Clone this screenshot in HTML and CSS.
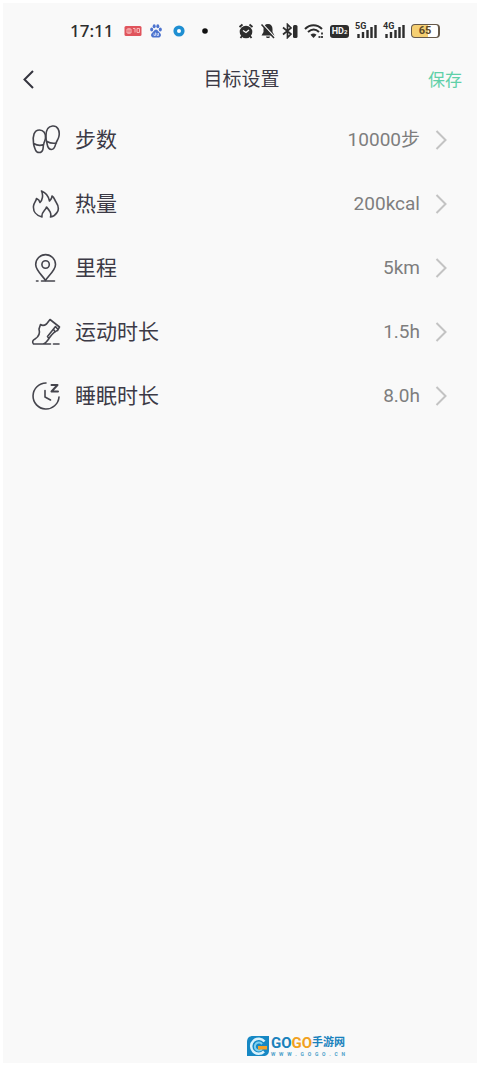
FILE: index.html
```html
<!DOCTYPE html>
<html lang="zh-CN">
<head>
<meta charset="utf-8">
<meta name="viewport" content="width=device-width, initial-scale=1">
<title>目标设置</title>
<link rel="stylesheet" href="styles.css">
</head>
<body>
<div class="screen">
  <div class="status">
    <div class="status-left">
      <span class="clock">17:11</span>
      <svg width="18" height="12" viewBox="0 0 18 12"><rect x="0.5" y="1" width="17" height="10" rx="1.500" fill="#e0545c"/><path d="M3 4h4v4H3zM5 3v6M9 3.500h2v4M13 3.500h2.500v4H13z" fill="none" stroke="#f7b9b9"/></svg>
      <svg class="paw" width="12" height="14" viewBox="0 0 12 14" fill="#4d74cf"><ellipse cx="1.700" cy="5.500" rx="1.500" ry="2"/><ellipse cx="4.200" cy="2.300" rx="1.500" ry="2"/><ellipse cx="7.800" cy="2.300" rx="1.500" ry="2"/><ellipse cx="10.300" cy="5.500" rx="1.500" ry="2"/><path d="M6 5.500c2 0 2.500 2.500 4 3.500 2 2 .5 5-2 4.500H4C1.500 14 0 11 2 9c1.500-1 2-3.500 4-3.500z"/><path d="M4 9.500v2h1.500v-3M7 9v2.500h1.500V9" fill="none" stroke="#dbe5fb" stroke-width=".8"/></svg>
      <svg class="ring" width="12" height="12" viewBox="0 0 12 12"><circle cx="6" cy="6" r="3.800" fill="#fff" stroke="#1f8fd2" stroke-width="3.600"/></svg>
      <svg class="dot" width="6" height="6" viewBox="0 0 6 6"><circle cx="3" cy="3" r="2.800" fill="#111"/></svg>
    </div>
    <div class="status-right">
      <svg width="16" height="16" viewBox="0 0 16 16"><circle cx="8" cy="9" r="6.300" fill="#2d2d2d"/><path d="M1.500 4 4.500 1.500M14.500 4l-3-2.500M4 13l-1.500 2M12 13l1.500 2" stroke="#2d2d2d" stroke-width="1.800"/><path d="M5 7.500 8 9.500l3-2.500" fill="none" stroke="#f9f9f9" stroke-width="1.300"/></svg>
      <svg width="16" height="16" viewBox="0 0 16 16"><path d="M8 1c3 0 4.500 2 4.500 5v3l2 3.500h-13l2-3.500V6C3.500 3 5 1 8 1zM6 13.500h4c0 2-4 2-4 0z" fill="#2d2d2d"/><path d="M3 1.500 15.500 15" stroke="#f9f9f9" stroke-width="1.500"/><path d="M1.500 1.500 14 15" stroke="#2d2d2d" stroke-width="1.500"/></svg>
      <svg width="16" height="16" viewBox="0 0 16 16"><path d="M1 4.500 9 11l-3.500 3.500v-13L9 5l-8 6.500" fill="none" stroke="#2d2d2d" stroke-width="1.700"/><rect x="11" y="2" width="4.500" height="13" rx="1.500" fill="#2d2d2d"/></svg>
      <svg width="20" height="16" viewBox="0 0 20 16"><path d="M1 6c5-5 12-5 17 0M4 9c4-3.500 7.500-3.500 11 0" fill="none" stroke="#2d2d2d" stroke-width="2"/><path d="m9.500 15-3-3.300c2-1.600 4-1.600 6 0z" fill="#2d2d2d"/><path d="M15.500 13v2M18 9.500v2M18 13v2" stroke="#444" stroke-width="2"/></svg>
      <span class="hd">HD<small>2</small></span>
      <span class="signal"><small>5G</small><svg width="22" height="16" viewBox="0 0 22 16"><path d="M3.500 11v4M8 9v6M12.500 7v8M16.500 4v11M20.500 2v13" stroke="#2d2d2d" stroke-width="2.400"/></svg></span>
      <span class="signal"><small>4G</small><svg width="22" height="16" viewBox="0 0 22 16"><path d="M3.500 11v4M8 9v6M12.500 7v8M16.500 4v11M20.500 2v13" stroke="#2d2d2d" stroke-width="2.400"/></svg></span>
      <span class="battery">65</span>
    </div>
  </div>

  <header class="bar">
    <button class="back" aria-label="返回"><svg width="14" height="20" viewBox="0 0 14 20"><path d="M12 1 3.500 9.500l8.500 8.500" fill="none" stroke="#35353f" stroke-width="2"/></svg></button>
    <h1>目标设置</h1>
    <button class="save">保存</button>
  </header>

  <main class="goals">
    <button class="goal">
      <svg class="icon" viewBox="0 0 30 30"><path d="M8.500 5c4 0 6.500 3.500 6 8-.3 2.500-1.300 4-1.800 6-.7 1.700-.2 4-1 6-1 3.300-6 3.500-7.200 0-.8-2-2-5-2-7C1.500 11 3 5 8.500 5zM2.700 18.500c3 1.800 7 2.300 10 1"/><path d="M21.500 1c5-.5 7.500 4.500 6.500 10-.4 3-2.300 5-3 7-.8 3-1.500 6.500-4.500 6.500-3 0-4-3-4.500-6-.3-2-1-3.500-1-6-.3-5 1-11 6.500-11.500zM16 16.500c3 1.700 6 2.200 9.400 1.500"/></svg>
      <span class="name">步数</span><span class="value">10000步</span>
      <svg class="arrow" viewBox="0 0 12 20"><path d="m1.500 1 9 9-9 9"/></svg>
    </button>
    <button class="goal">
      <svg class="icon" viewBox="0 0 30 30"><path d="M11 28C5 26.500 2 22 2.500 17 3 13.500 5 12.500 5.500 9.500c2 .8 3 2 3.500 4C11.500 11 12.500 6 10.500 2c4 1.500 7 5 8 10 2-1.500 2.500-3.500 2.500-5 2.500 1.500 2.500 4 4 6 2 3 3.500 7 1 10.500-1.500 2.500-3.500 4-6.500 4.500 1.200-4-1-6.500-4-10-.8 3.500-5.500 5-4.500 10z"/></svg>
      <span class="name">热量</span><span class="value">200kcal</span>
      <svg class="arrow" viewBox="0 0 12 20"><path d="m1.500 1 9 9-9 9"/></svg>
    </button>
    <button class="goal">
      <svg class="icon" viewBox="0 0 30 30"><path d="M14.500 27.500C12 23 4.700 17.500 4.700 11.500a9.900 9.900 0 0 1 19.800 0C24.500 17.500 17 23 14.500 27.500z"/><circle cx="14.600" cy="11.500" r="3.700"/><path d="M10.500 28h13M5.500 28h1.500"/></svg>
      <span class="name">里程</span><span class="value">5km</span>
      <svg class="arrow" viewBox="0 0 12 20"><path d="m1.500 1 9 9-9 9"/></svg>
    </button>
    <button class="goal">
      <svg class="icon" viewBox="0 0 30 30"><path d="M12 27H2.500C1 25.500 1.500 23 4 22c4-2.500 5.500-5 4-10L9.500 7.500c2 1.500 4 1 6-.5L19 2.500l9.500 7.500-2 3.500C22 15 20.500 18 18 21.500 16 24.500 14.500 26.500 12 27zM12 27h7.500M22.500 27H28M27 12.500l-2.500-3-8 10 1.500 2M22.500 12l1.500 3"/></svg>
      <span class="name">运动时长</span><span class="value">1.5h</span>
      <svg class="arrow" viewBox="0 0 12 20"><path d="m1.500 1 9 9-9 9"/></svg>
    </button>
    <button class="goal">
      <svg class="icon" viewBox="0 0 30 30"><path d="M15 2A13 13 0 1 0 28 16M14 9.500V16l5.500 3"/><path d="M20.500 4h6l-6 6.500h6.500" stroke-width="2"/></svg>
      <span class="name">睡眠时长</span><span class="value">8.0h</span>
      <svg class="arrow" viewBox="0 0 12 20"><path d="m1.500 1 9 9-9 9"/></svg>
    </button>
  </main>

  <footer class="brand">
    <svg width="22" height="22" viewBox="0 0 22 22"><path d="M6 1h16v14c0 4-2 6-6 6H0V7c0-4 2-6 6-6z" fill="#1688c4"/><path d="M17.500 6.500A7.500 7.500 0 1 0 17 16.500" fill="none" stroke="#d9f1fb" stroke-width="2.500"/><path d="M15 9a4 4 0 1 0 0 5" fill="none" stroke="#7fd0ef" stroke-width="2"/><path d="M11 11h9v3.500h-9z" fill="#f3a128"/></svg>
    <div>
      <div class="brand-name"><b>GO</b><b class="gold">GO</b><span>手游网</span></div>
      <div class="brand-url">W W W . G O G O . C N</div>
    </div>
  </footer>
</div>
</body>
</html>
```
FILE: styles.css
```css
* { box-sizing: border-box; }
body {
  margin: 0;
  background: #fff;
  color: #3c3a46;
  font-family: Roboto, "Noto Sans CJK SC", sans-serif;
}
button {
  margin: 0;
  padding: 0;
  border: 0;
  background: none;
  color: inherit;
  font: inherit;
  cursor: pointer;
}
svg { display: block; flex: none; }
.screen {
  display: flex;
  flex-direction: column;
  min-height: calc(100vh - 6px);
  margin: 3px;
  background: #f9f9f9;
}
.status {
  display: flex;
  justify-content: space-between;
  align-items: center;
  height: 56px;
  padding: 0 37px 0 67px;
}
.status-left, .status-right { display: flex; align-items: center; }
.status-right { gap: 6px; }
.clock {
  width: 54px;
  color: #2d2d2d;
  font: 500 17px/20px "Noto Sans", sans-serif;
}
.paw { margin-left: 8px; }
.ring { margin-left: 11px; }
.dot { margin-left: 17px; }
.hd {
  width: 19px;
  border-radius: 3px;
  background: #2d2d2d;
  color: #f9f9f9;
  font-size: 9px;
  font-weight: 700;
  line-height: 13px;
  text-align: center;
}
.hd small { font-size: 6px; }
.signal { position: relative; }
.signal small {
  position: absolute;
  top: -1px;
  left: 0;
  color: #2d2d2d;
  font-size: 9px;
  font-weight: 700;
  line-height: 9px;
}
.battery {
  width: 29px;
  border: 1px solid #66594a;
  border-right-width: 2px;
  border-radius: 4px;
  background: linear-gradient(90deg, #f5cf72 62%, #fff 62%);
  color: #5b4a2a;
  font-size: 11px;
  font-weight: 700;
  line-height: 12px;
  text-align: center;
}
.bar {
  display: grid;
  grid-template-columns: 1fr auto 1fr;
  align-items: center;
  height: 42px;
  padding: 0 15px 0 18px;
}
.back { justify-self: start; }
.bar h1 { margin: 0; font-size: 19px; font-weight: 400; line-height: 28px; }
.save { justify-self: end; color: #5fd0a8; font-size: 17px; line-height: 24px; }
.goals { display: flex; flex-direction: column; padding-top: 7px; }
.goal {
  display: flex;
  align-items: center;
  height: 64px;
  padding: 0 30px 0 28px;
  text-align: left;
}
.icon {
  width: 30px;
  height: 30px;
  fill: none;
  stroke: #45454d;
  stroke-width: 1.6;
  stroke-linejoin: round;
  stroke-linecap: round;
}
.name { flex: 1; margin-left: 14px; font-size: 21px; line-height: 30px; }
.value { color: #7e7e7e; font-size: 19px; line-height: 28px; }
.arrow {
  width: 12px;
  height: 20px;
  margin-left: 15px;
  fill: none;
  stroke: #c3c3c3;
  stroke-width: 2;
}
.brand {
  display: flex;
  align-items: center;
  align-self: center;
  gap: 2px;
  margin-top: auto;
  margin-left: 112px;
  padding-bottom: 6px;
}
.brand-name {
  display: flex;
  align-items: center;
  color: #1982bd;
  font-size: 11px;
  font-weight: 700;
  line-height: 16px;
}
.brand-name b { font: 700 15px/16px "Liberation Sans Narrow", Roboto, sans-serif; }
.brand-name .gold { color: #f1a11f; }
.brand-url {
  color: #4c9fc9;
  font-size: 5px;
  font-weight: 700;
  line-height: 6px;
  text-align: center;
  text-align-last: justify;
}
```
